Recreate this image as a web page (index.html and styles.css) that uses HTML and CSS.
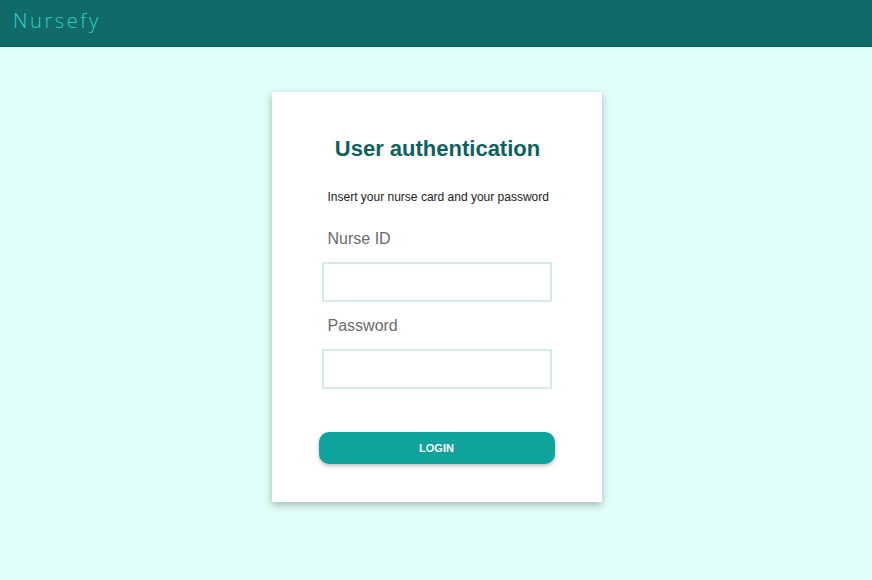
FILE: index.html
```html
<!DOCTYPE html>
<html>
<head>
<meta charset="utf-8">
<link rel="stylesheet" href="styles.css">
</head>
<body>
<header class="topbar"><span class="brand">Nursefy</span></header>
<main class="page">
  <form class="card">
    <h1 class="title">User authentication</h1>
    <p class="subtitle">Insert your nurse card and your password</p>
    <label class="label">Nurse ID</label>
    <input class="field" type="text">
    <label class="label">Password</label>
    <input class="field" type="password">
    <button class="btn" type="button">LOGIN</button>
  </form>
</main>
</body>
</html>
```
FILE: styles.css
```css
* { box-sizing: border-box; }
html, body { margin: 0; padding: 0; }
body {
  background: #e1fefb;
  font-family: "Liberation Sans", Arial, sans-serif;
  width: 872px;
  height: 580px;
  overflow: hidden;
}
.topbar {
  height: 47px;
  background: #106a67;
  border-bottom: 1px solid #0d5956;
  display: flex;
  align-items: center;
  padding-left: 13px;
}
.brand {
  font-family: "Open Sans", sans-serif;
  font-weight: 300;
  color: #35cfc9;
  font-size: 20px;
  letter-spacing: 2.6px;
  margin-top: -6px;
}
.page {
  display: flex;
  justify-content: center;
  padding-top: 45px;
}
.card {
  width: 330px;
  height: 410px;
  margin-left: 1px;
  background: #fff;
  box-shadow: 0 3px 8px rgba(0,0,0,0.28);
  display: flex;
  flex-direction: column;
  align-items: flex-start;
  padding: 44px 0 0 50px;
}
.title {
  margin: 0;
  align-self: center;
  font-size: 22px;
  font-weight: bold;
  color: #0d625e;
  margin-left: -48px;
}
.subtitle {
  margin: 28px 0 0 6px;
  font-size: 12px;
  color: #222;
}
.label {
  margin: 26px 0 0 6px;
  font-size: 16px;
  color: #6b6b6b;
}
.field {
  margin-top: 14px;
  width: 230px;
  height: 40px;
  border: 2px solid #d6ebe7;
  background: #fff;
  outline: none;
}
.field + .label { margin-top: 15px; }
.btn {
  margin: 43px 0 0 -3px;
  width: 236px;
  height: 32px;
  border: none;
  border-radius: 10px;
  background: #0ea39c;
  color: #fff;
  font-family: "Liberation Sans", Arial, sans-serif;
  font-weight: bold;
  font-size: 11px;
  box-shadow: 0 2px 4px rgba(0,0,0,0.25);
}
```
